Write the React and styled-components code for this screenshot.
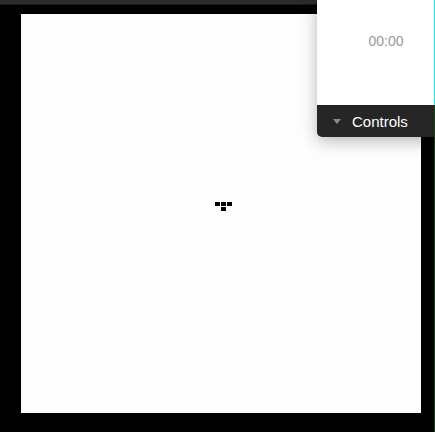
import React from 'react';
import styled, { createGlobalStyle } from 'styled-components';

const GlobalStyle = createGlobalStyle`
  html, body {
    margin:0;
    padding:0;
    background:#000;
    overflow:hidden;
  }
  body {
    font-family:"Liberation Sans", Arial, sans-serif;
  }
`;

const Page = styled.div`
  position:relative;
  width:435px;
  height:432px;
  background:#000;
`;

const TopBar = styled.div`
  height:4px;
  background:#2b2b2b;
  border-bottom:1px solid #1a1a1a;
`;

const Stage = styled.div`
  padding:9px 0 0 21px;
`;

const Canvas = styled.div`
  width:400px;
  height:399px;
  background:#fdfdfd;
  display:flex;
  align-items:center;
  justify-content:center;
`;

const Glyph = styled.div`
  display:grid;
  grid-template-columns:repeat(3, 5px);
  grid-auto-rows:4px;
  gap:1px;
  margin:-14px 0 0 5px;
`;

const Pixel = styled.span`
  background:#000;
  grid-column:${p => p.col};
`;

const EdgeLine = styled.div`
  position:absolute;
  top:0;
  right:0;
  width:1px;
  height:100%;
  background:#0b4a12;
`;

const Panel = styled.div`
  position:absolute;
  top:0;
  right:0;
  width:118px;
  border-bottom-left-radius:5px;
  overflow:hidden;
  box-shadow:0 4px 16px rgba(0,0,0,0.28);
`;

const Timer = styled.div`
  height:105px;
  background:#fff;
  border-right:1px solid #00f0ff;
  display:flex;
  align-items:flex-start;
  justify-content:center;
  padding:33px 0 0 21px;
  box-sizing:border-box;
  color:#999;
  font-size:14px;
`;

const ControlsBar = styled.div`
  height:32px;
  background:#262626;
  border-right:1px solid #0b4a12;
  display:flex;
  align-items:center;
  gap:11px;
  padding:1px 0 0 16px;
  box-sizing:border-box;
  color:#fff;
  font-size:15px;
`;

const Caret = styled.span`
  width:0;
  height:0;
  border-left:4.5px solid transparent;
  border-right:4.5px solid transparent;
  border-top:5px solid #8a8a8a;
  margin-top:-1px;
`;

export default function App() {
  return (
    <>
      <GlobalStyle />
      <Page>
        <TopBar />
        <Stage>
          <Canvas>
            <Glyph>
              <Pixel col={1} />
              <Pixel col={2} />
              <Pixel col={3} />
              <Pixel col={2} />
            </Glyph>
          </Canvas>
        </Stage>
        <EdgeLine />
        <Panel>
          <Timer>00:00</Timer>
          <ControlsBar>
            <Caret />
            Controls
          </ControlsBar>
        </Panel>
      </Page>
    </>
  );
}
